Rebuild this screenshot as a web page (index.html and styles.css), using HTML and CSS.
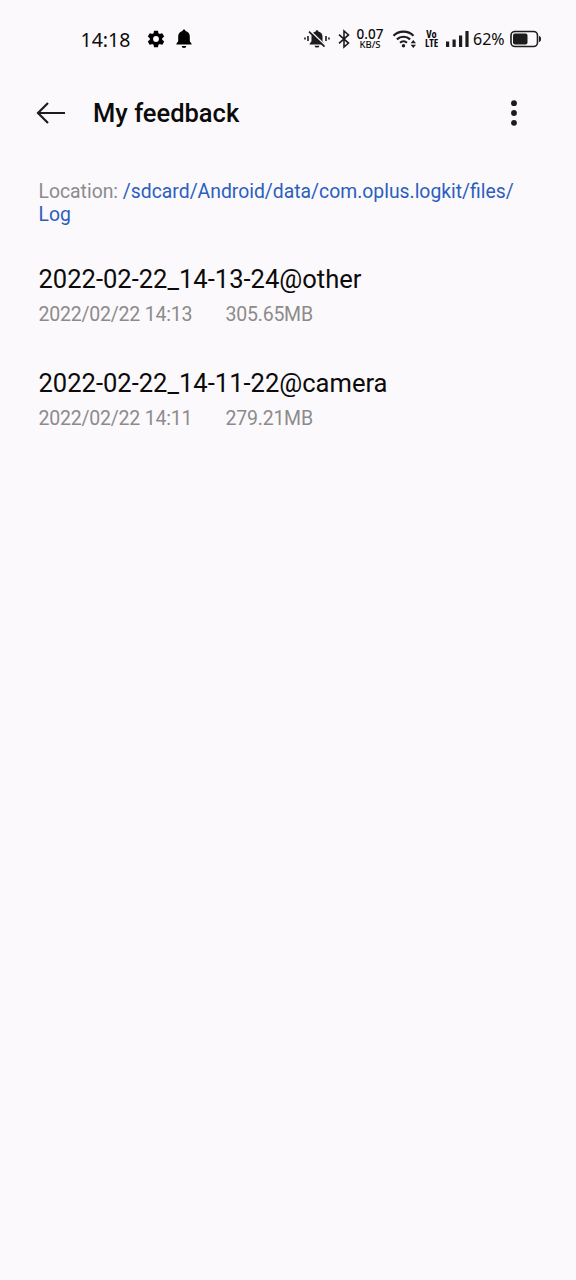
FILE: index.html
```html
<!DOCTYPE html>
<html lang="en">
<head>
    <meta charset="UTF-8">
    <meta name="viewport" content="width=device-width, initial-scale=1.0">
    <title>My feedback</title>
    <link rel="stylesheet" href="styles.css">
</head>
<body>
    <div class="status-bar">
        <span class="clock">14:18</span>
        <svg class="icon-gear" width="20" height="20" viewBox="0 0 24 24"><path d="M19.4 13a7.500 7.500 0 0 0 0-2l2.100-1.650a.5.5 0 0 0 .12-.64l-2-3.460a.5.5 0 0 0-.61-.22l-2.490 1a7.300 7.300 0 0 0-1.690-.98l-.38-2.650A.5.5 0 0 0 14 2h-4a.5.5 0 0 0-.49.42l-.38 2.650c-.61.25-1.170.58-1.690.98l-2.490-1a.5.5 0 0 0-.61.22l-2 3.460a.5.5 0 0 0 .12.64L4.600 11a7.500 7.500 0 0 0 0 2l-2.140 1.650a.5.5 0 0 0-.12.64l2 3.460c.12.22.39.3.61.22l2.490-1c.52.4 1.080.73 1.690.98l.38 2.650c.03.24.24.4.49.4h4c.25 0 .46-.16.49-.4l.38-2.650c.61-.25 1.170-.58 1.690-.98l2.490 1c.22.08.49 0 .61-.22l2-3.460a.5.5 0 0 0-.12-.64zM12 15.500a3.500 3.500 0 1 1 0-7 3.500 3.500 0 0 1 0 7z"/></svg>
        <svg class="icon-bell" width="16" height="20" viewBox="0 0 16 20"><path d="M8 .6c.8 0 1.400.6 1.400 1.400 2.900.6 4.400 2.800 4.400 5.500v4.600c0 1 1.900 2 1.900 3.500H.3c0-1.500 1.900-2.500 1.900-3.500V7.500C2.200 4.800 3.700 2.600 6.600 2c0-.8.6-1.400 1.400-1.400zM5.700 16.900h4.600a2.300 2 0 0 1-4.600 0z"/></svg>
        <div class="indicators">
            <svg class="icon-mute" width="26" height="20" viewBox="0 0 26 20">
                <path d="M13 1.200c.7 0 1.300.5 1.300 1.200 2.800.6 4.200 2.500 4.200 5.200v4.500c0 1 1.900 2 1.900 3.500H5.600c0-1.500 1.900-2.500 1.900-3.500V7.600c0-2.700 1.400-4.600 4.200-5.200 0-.7.6-1.200 1.300-1.200zM10.600 16.700h4.800a2.400 1.900 0 0 1-4.800 0z"/>
                <path class="cut" d="M6.200 1.700l15.500 15"/>
                <path class="line" d="M5 2.600l15.500 15M1 8.500v2M4 7v5M22 7v5M25 8.500v2"/>
            </svg>
            <svg class="icon-bluetooth" width="12" height="20" viewBox="0 0 12 20"><path class="line" d="M1 5.600l9.500 8.500L6 18V2l4.500 3.900L1 14.400"/></svg>
            <div class="net-speed">
                <span class="net-value">0.07</span>
                <span class="net-unit">KB/S</span>
            </div>
            <svg class="icon-wifi" width="25" height="20" viewBox="0 0 25 20">
                <path class="arc" d="M1.500 6.800a14.300 14.300 0 0 1 20 0M4.900 10.400a9.500 9.500 0 0 1 13.200 0M8.100 13.700a5 5 0 0 1 6.800 0"/>
                <circle cx="11.500" cy="16.700" r="1.700"/>
                <path d="M18.600 14.200l2.700-3.200 2.700 3.200zM18.600 15.800h5.400L21.300 19z"/>
            </svg>
            <div class="volte">
                <span>Vo</span>
                <span>LTE</span>
            </div>
            <svg class="icon-signal" width="24" height="18" viewBox="0 0 24 18"><path d="M1 11.500h3.200V17H1zM7.500 9.500h3.200V17H7.500zM14 5.500h3.200V17H14zM20.400 1h3.200v16h-3.200z"/></svg>
            <span class="battery-level">62%</span>
            <svg class="icon-battery" width="32" height="18" viewBox="0 0 32 18">
                <rect class="shell" x="1" y="1.500" width="26.500" height="15" rx="4"/>
                <rect x="3" y="3.500" width="14.500" height="11" rx="2"/>
                <path d="M29 6c1.500.3 2 1.300 2 3s-.5 2.700-2 3z"/>
            </svg>
        </div>
    </div>

    <header class="toolbar">
        <svg class="icon-back" width="30" height="24" viewBox="0 0 30 24"><path d="M29 12H2M12 2L2 12l10 10"/></svg>
        <h1>My feedback</h1>
        <svg class="icon-more" width="8" height="28" viewBox="0 0 8 28"><circle cx="4" cy="4.200" r="2.900"/><circle cx="4" cy="14" r="2.900"/><circle cx="4" cy="23.800" r="2.900"/></svg>
    </header>

    <main class="content">
        <p class="location">Location: <a class="path">/sdcard/Android/data/com.oplus.logkit/files/<wbr>Log</a></p>
        <ul class="log-list">
            <li class="log">
                <h2>2022-02-22_14-13-24@other</h2>
                <div class="meta">
                    <span class="date">2022/02/22 14:13</span>
                    <span>305.65MB</span>
                </div>
            </li>
            <li class="log">
                <h2>2022-02-22_14-11-22@camera</h2>
                <div class="meta">
                    <span class="date">2022/02/22 14:11</span>
                    <span>279.21MB</span>
                </div>
            </li>
        </ul>
    </main>
</body>
</html>
```
FILE: styles.css
```css
* {
    box-sizing: border-box;
}

body {
    margin: 0;
    min-height: 100vh;
    background-color: #fbf9fb;
    color: #0b0b0b;
    font-family: Roboto, sans-serif;
}

h1, h2, p, ul {
    margin: 0;
    padding: 0;
    font-weight: 400;
}

svg {
    flex: none;
}

/* status bar */
.status-bar {
    display: flex;
    align-items: center;
    height: 78px;
    padding: 0 34px 0 80.5px;
    font-family: "Noto Sans", sans-serif;
    white-space: nowrap;
}

.clock {
    width: 65px;
    font-size: 19.5px;
}

.icon-bell {
    margin-left: 10px;
}

.indicators {
    display: flex;
    align-items: center;
    margin-left: auto;
}

.indicators svg {
    fill: #1c1c1c;
}

.indicators .line {
    fill: none;
    stroke: #1c1c1c;
    stroke-width: 1.6;
}

.indicators .cut {
    fill: none;
    stroke: #fbf9fb;
    stroke-width: 1.5;
}

.icon-bluetooth {
    margin-left: 8px;
}

.net-speed {
    display: flex;
    flex-direction: column;
    align-items: center;
    width: 28px;
    margin-left: 6px;
    font-weight: 500;
}

.net-value {
    font-size: 13.5px;
    line-height: 11px;
}

.net-unit {
    font-size: 9.5px;
    line-height: 9px;
}

.icon-wifi {
    margin-left: 8px;
}

.indicators .arc {
    fill: none;
    stroke: #1c1c1c;
    stroke-width: 2.2;
}

.volte {
    display: flex;
    flex-direction: column;
    align-items: center;
    width: 13px;
    margin-left: 8px;
    font-family: "Open Sans", sans-serif;
    font-size: 10.5px;
    font-weight: 700;
    font-stretch: 75%;
    line-height: 9px;
}

.icon-signal {
    margin-left: 7px;
}

.battery-level {
    width: 32px;
    margin: 0 5px 0 4px;
    font-size: 16px;
}

.indicators .shell {
    fill: none;
    stroke: #1c1c1c;
    stroke-width: 1.6;
}

/* toolbar */
.toolbar {
    display: flex;
    align-items: center;
    height: 70px;
    padding: 0 58px 0 36px;
}

.toolbar h1 {
    margin-left: 27px;
    font-size: 25.5px;
    font-weight: 500;
}

.icon-back {
    fill: none;
    stroke: #1c1c1c;
    stroke-width: 2.2;
}

.icon-more {
    margin-left: auto;
    fill: #1c1c1c;
}

/* log list */
.content {
    padding: 32px 38px 0 38.5px;
}

.location {
    color: #8c8b8c;
    font-size: 19.35px;
    line-height: 23px;
}

.path {
    color: #2b5fbe;
}

.log-list {
    margin-top: 38px;
    list-style: none;
}

.log {
    height: 104px;
}

.log h2 {
    font-size: 25.55px;
    line-height: 30px;
}

.meta {
    display: flex;
    margin-top: 9px;
    color: #8c8b8c;
    font-size: 19.5px;
    letter-spacing: -0.22px;
    line-height: 24px;
}

.date {
    width: 187px;
}
```
